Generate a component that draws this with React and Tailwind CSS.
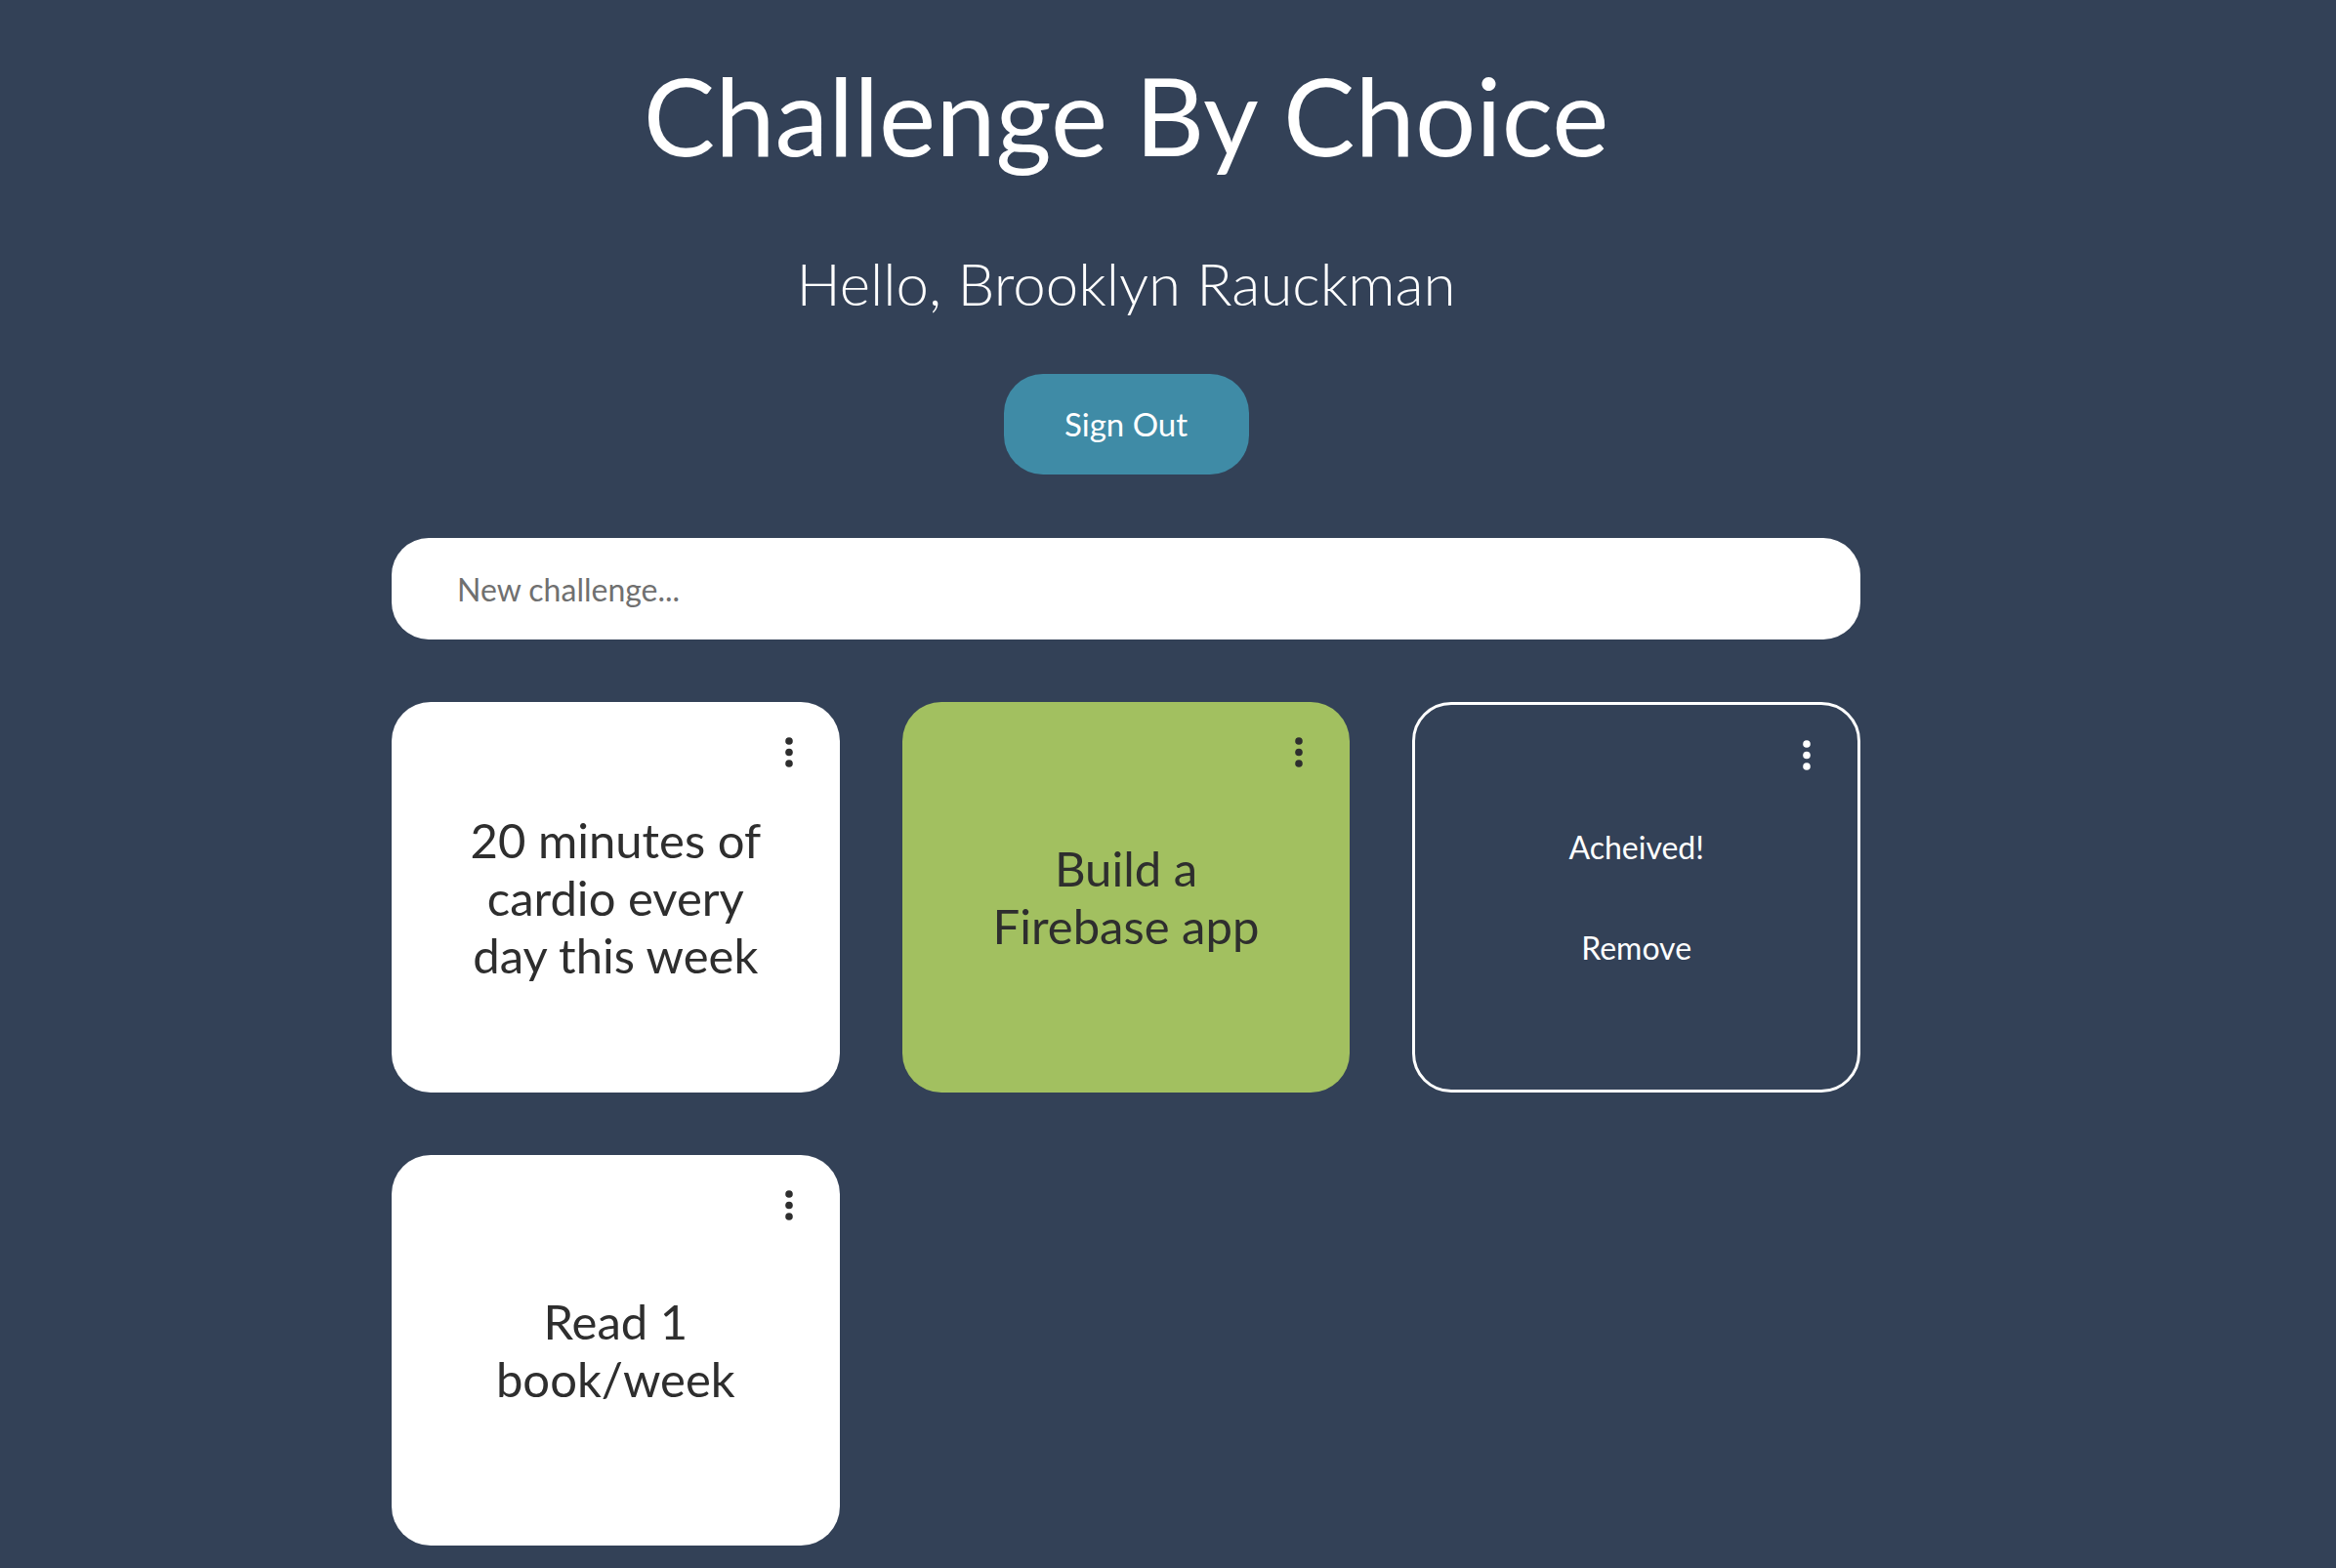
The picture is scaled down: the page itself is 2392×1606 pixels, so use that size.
import { useState } from "react";

const challenges = [
  { id: 1, text: "20 minutes of cardio every day this week", state: "open" },
  { id: 2, text: "Build a Firebase app", state: "done" },
  { id: 3, text: "Finish the marathon", state: "menu" },
  { id: 4, text: "Read 1 book/week", state: "open" },
];

function Dots({ light }) {
  return (
    <svg
      width="8"
      height="31"
      viewBox="0 0 8 31"
      className="absolute top-[36px] right-[48px]"
    >
      <g fill={light ? "#ffffff" : "#2e2e2e"}>
        <circle cx="4" cy="4" r="3.8" />
        <circle cx="4" cy="15.5" r="3.8" />
        <circle cx="4" cy="27" r="3.8" />
      </g>
    </svg>
  );
}

function ChallengeCard({ item }) {
  if (item.state === "menu") {
    return (
      <div className="relative h-[400px] rounded-[40px] border-[3px] border-white flex flex-col items-center justify-center gap-[71px]">
        <Dots light />
        <button className="text-[32px] leading-[32px] text-white">Acheived!</button>
        <button className="text-[32px] leading-[32px] text-white">Remove</button>
      </div>
    );
  }

  return (
    <div
      className={`relative h-[400px] rounded-[40px] flex items-center justify-center text-center px-[74px] ${
        item.state === "done" ? "bg-[#a2c060]" : "bg-white"
      }`}
    >
      <Dots />
      <p className="text-[49px] leading-[59px] text-[#2e2e2e]">{item.text}</p>
    </div>
  );
}

export default function App() {
  const [draft, setDraft] = useState("");

  return (
    <div
      className="min-h-screen bg-[#334157] pb-10"
      style={{ fontFamily: "Lato, 'Open Sans', sans-serif" }}
    >
      <div className="w-[1504px] ml-[401px] flex flex-col items-center">
        {/* HEADER */}
        <h1 className="pt-[62px] text-[110px] leading-[110px] text-white">
          Challenge By Choice
        </h1>
        <h2 className="mt-[88px] text-[60px] leading-[60px] font-light text-white">
          Hello, Brooklyn Rauckman
        </h2>

        <button className="mt-[63px] w-[251px] h-[103px] rounded-[40px] bg-[#3f8ba6] text-white text-[33px]">
          Sign Out
        </button>

        {/* NEW CHALLENGE */}
        <input
          value={draft}
          onChange={(e) => setDraft(e.target.value)}
          placeholder="New challenge..."
          className="mt-[65px] w-full h-[104px] rounded-[38px] bg-white pl-[67px] pr-8 text-[32px] text-[#2e2e2e] placeholder:text-[#707070] outline-none"
        />

        {/* CARDS */}
        <div className="mt-[64px] w-full grid grid-cols-3 gap-[64px]">
          {challenges.map((item) => (
            <ChallengeCard key={item.id} item={item} />
          ))}
        </div>
      </div>
    </div>
  );
}
